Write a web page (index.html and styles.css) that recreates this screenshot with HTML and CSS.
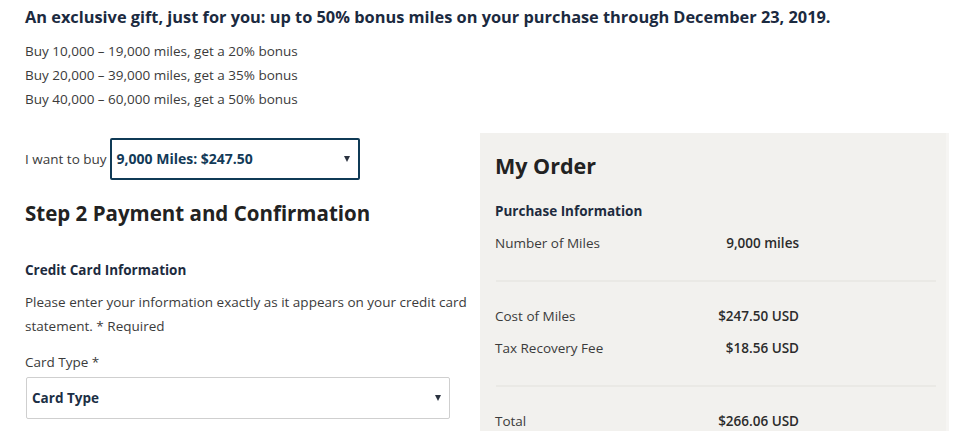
FILE: index.html
```html
<!DOCTYPE html>
<html lang="en">
<head>
  <meta charset="UTF-8">
  <title>Buy Miles</title>
  <link rel="stylesheet" href="styles.css">
</head>
<body>
  <h1 class="promo">An exclusive gift, just for you: up to 50% bonus miles on your purchase through December 23, 2019.</h1>
  <ul class="tiers">
    <li>Buy 10,000 – 19,000 miles, get a 20% bonus</li>
    <li>Buy 20,000 – 39,000 miles, get a 35% bonus</li>
    <li>Buy 40,000 – 60,000 miles, get a 50% bonus</li>
  </ul>

  <div class="columns">
    <div class="checkout">
      <div class="buy-row">
        <span class="buy-label">I want to buy</span>
        <div class="select select-miles">
          <span>9,000 Miles: $247.50</span>
          <span class="caret"></span>
        </div>
      </div>

      <h2 class="step">Step 2 Payment and Confirmation</h2>

      <h3 class="section-title">Credit Card Information</h3>
      <p class="hint">Please enter your information exactly as it appears on your credit card statement. * Required</p>

      <label class="field-label">Card Type *</label>
      <div class="select select-card">
        <span>Card Type</span>
        <span class="caret"></span>
      </div>
    </div>

    <div class="order">
      <h2 class="order-title">My Order</h2>
      <h3 class="section-title">Purchase Information</h3>
      <div class="line">
        <span>Number of Miles</span>
        <span class="amount">9,000 miles</span>
      </div>
      <hr class="divider">
      <div class="line">
        <span>Cost of Miles</span>
        <span class="amount">$247.50 USD</span>
      </div>
      <div class="line">
        <span>Tax Recovery Fee</span>
        <span class="amount">$18.56 USD</span>
      </div>
      <hr class="divider">
      <div class="line line-total">
        <span>Total</span>
        <span class="amount">$266.06 USD</span>
      </div>
    </div>
  </div>
</body>
</html>
```

FILE: styles.css
```css
* {
  box-sizing: border-box;
  margin: 0;
  padding: 0;
}
body {
  font-family: "Open Sans", Lato, sans-serif;
  background-color: white;
  color: #3b3b3b;
  padding: 5px 14px 0 25px;
  font-size: 13.5px;
  line-height: 24px;
}
.promo {
  font-size: 16.35px;
  font-weight: 700;
  color: #1b2a40;
  line-height: 24px;
  margin-bottom: 10px;
}
.tiers {
  list-style: none;
}
.columns {
  display: flex;
  align-items: flex-start;
  margin-top: 22px;
}
.checkout {
  width: 455px;
  padding-top: 5px;
}
.buy-row {
  display: flex;
  align-items: center;
  gap: 3px;
}
.select {
  display: flex;
  align-items: center;
  justify-content: space-between;
  font-weight: 700;
  color: #123a58;
}
.select-miles {
  width: 250px;
  height: 42px;
  border: 2px solid #0f3a56;
  border-radius: 2px;
  padding: 0 8px 0 5px;
  font-size: 14px;
}
.select-card {
  width: 424px;
  height: 42px;
  margin-left: 1px;
  border: 1px solid #cfcfcf;
  border-radius: 2px;
  padding: 0 8px 0 5px;
  font-size: 13.5px;
  color: #1b2f45;
}
.caret {
  width: 0;
  height: 0;
  border-left: 3.5px solid transparent;
  border-right: 3.5px solid transparent;
  border-top: 6px solid #2b3340;
}
.step {
  font-size: 20.5px;
  font-weight: 700;
  color: #222;
  line-height: 28px;
  margin-top: 19px;
}
.section-title {
  font-size: 13.5px;
  font-weight: 700;
  color: #1d2b3e;
  line-height: 24px;
}
.step + .section-title {
  margin-top: 31px;
}
.hint {
  margin-top: 8px;
  width: 443px;
}
.field-label {
  display: block;
  margin-top: 12px;
  margin-bottom: 3px;
}
.order {
  flex: 0 0 469px;
  background-color: #f2f1ee;
  border-right: 3px solid #f6f5f3;
  padding: 19px 10px 0 15px;
  min-height: 298px;
}
.order-title {
  font-size: 21.5px;
  font-weight: 700;
  color: #222;
  line-height: 28px;
  margin-bottom: 19px;
}
.order .section-title {
  margin-bottom: 8px;
}
.line {
  display: grid;
  grid-template-columns: 190px 114px;
}
.line + .line {
  margin-top: 8px;
}
.line-total {
  line-height: 20px;
  padding-top: 2px;
}
.amount {
  text-align: right;
  font-weight: 600;
  color: #2b2b2b;
}
.divider {
  border: none;
  border-top: 2px solid #eae9e5;
  margin: 25px 0 22px 1px;
}
```
